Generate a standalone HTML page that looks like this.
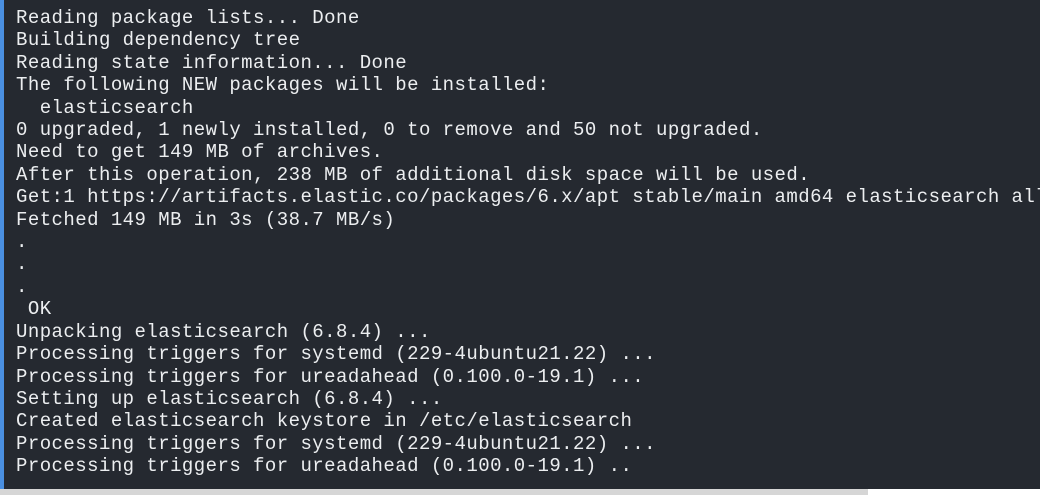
<!DOCTYPE html>
<html><head><meta charset="utf-8"><style>
html,body{margin:0;padding:0;width:1040px;height:495px;overflow:hidden;background:#252930;}
.stripe{position:absolute;left:0;top:0;width:4px;height:489px;background:#4a8fe0;}
pre{position:absolute;left:16px;top:7px;margin:0;font-family:"Liberation Mono",monospace;font-size:19px;letter-spacing:0.45px;line-height:22.4px;color:#eceef0;white-space:pre;}
.bot{position:absolute;left:0;top:489px;width:1040px;height:6px;background:#fff;}
.bot2{position:absolute;left:0;top:489px;width:868px;height:6px;background:#d6d6d6;}
</style></head><body>
<div class="stripe"></div>
<pre>Reading package lists... Done
Building dependency tree
Reading state information... Done
The following NEW packages will be installed:
  elasticsearch
0 upgraded, 1 newly installed, 0 to remove and 50 not upgraded.
Need to get 149 MB of archives.
After this operation, 238 MB of additional disk space will be used.
Get:1 https://artifacts.elastic.co/packages/6.x/apt stable/main amd64 elasticsearch all
Fetched 149 MB in 3s (38.7 MB/s)
.
.
.
 OK
Unpacking elasticsearch (6.8.4) ...
Processing triggers for systemd (229-4ubuntu21.22) ...
Processing triggers for ureadahead (0.100.0-19.1) ...
Setting up elasticsearch (6.8.4) ...
Created elasticsearch keystore in /etc/elasticsearch
Processing triggers for systemd (229-4ubuntu21.22) ...
Processing triggers for ureadahead (0.100.0-19.1) ..</pre>
<div class="bot"></div><div class="bot2"></div>
</body></html>
